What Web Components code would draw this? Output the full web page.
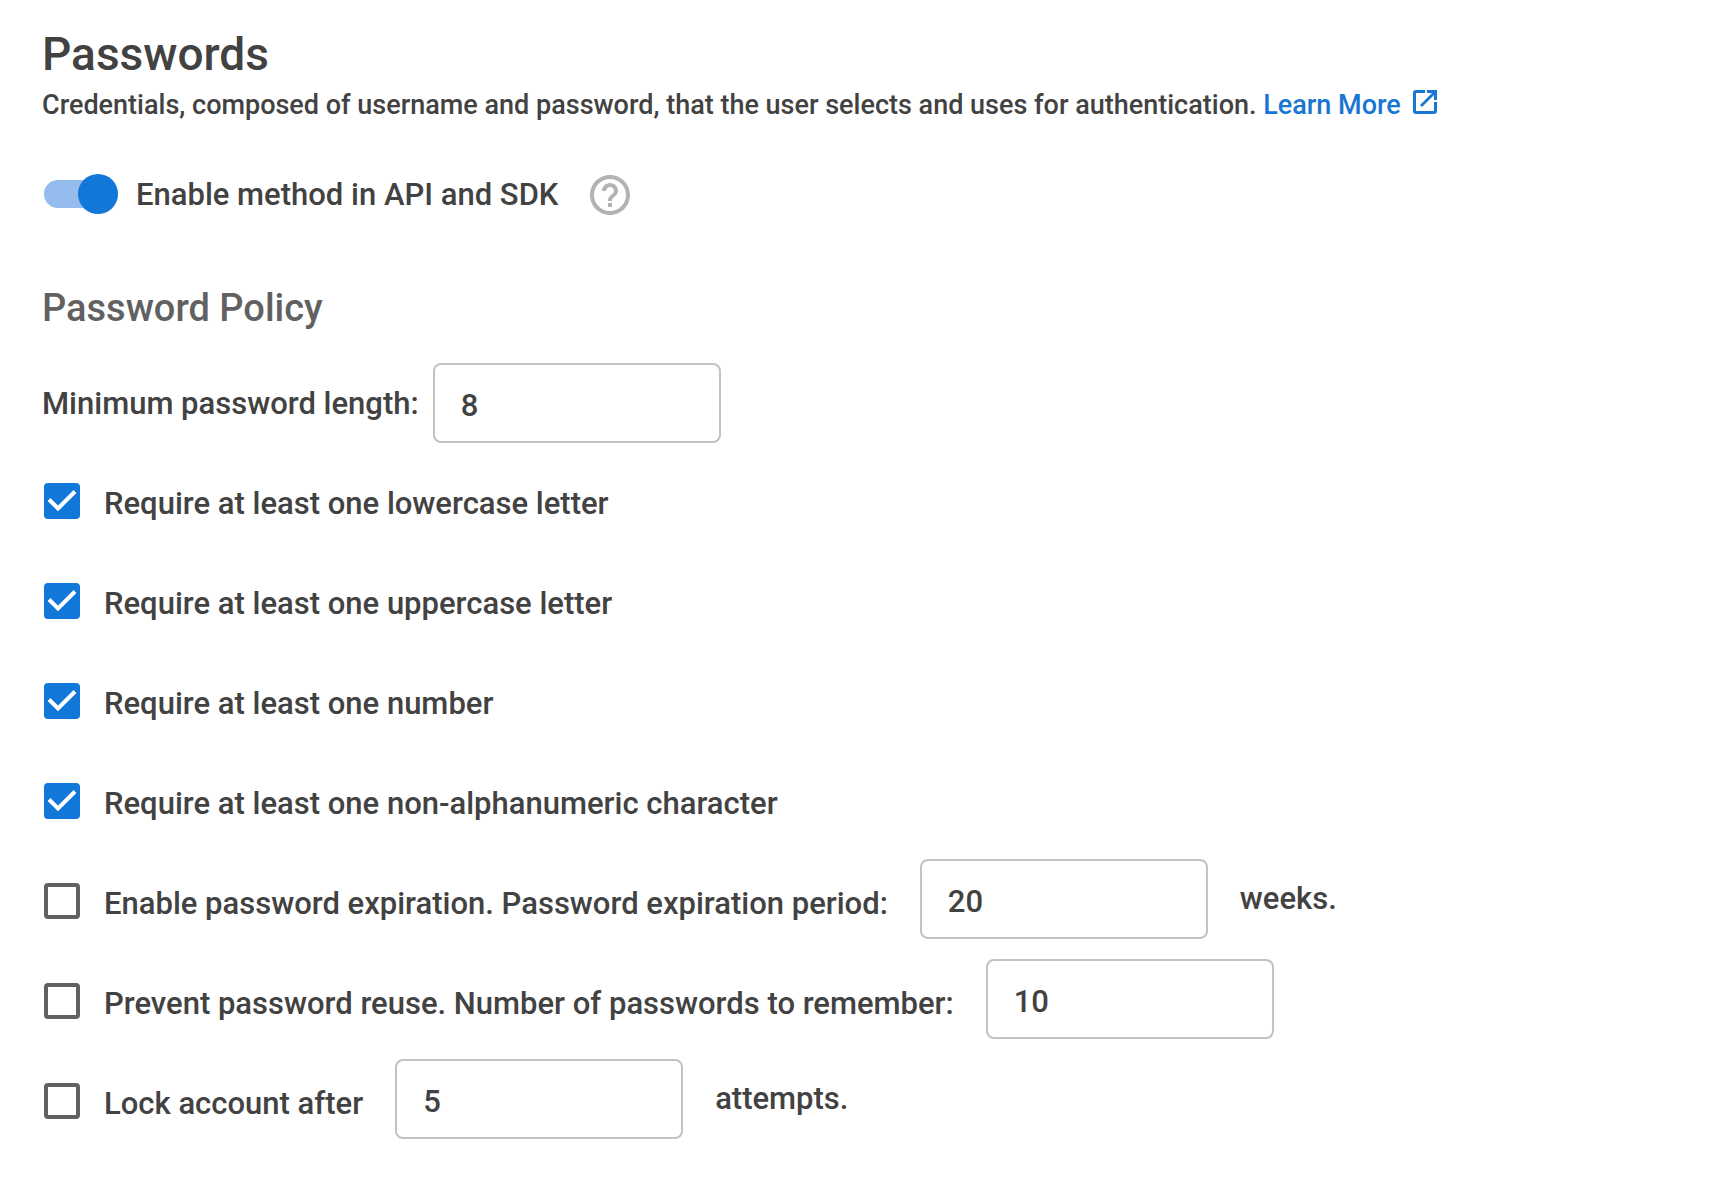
<!DOCTYPE html>
<html lang="en">
<head>
<meta charset="utf-8">
<meta name="viewport" content="width=device-width, initial-scale=1">
<title>Passwords</title>
<style>
    body { margin: 0; background: #fff; color: #424242; font: 500 31px/40px Roboto, "Liberation Sans", sans-serif; }
</style>
</head>
<body>
<password-settings></password-settings>

<script>
class ExternalLink extends HTMLElement {
    constructor() {
        super();
        this.attachShadow({ mode: 'open' });
    }

    connectedCallback() {
        this.shadowRoot.innerHTML = `
        <style>
            :host { display: inline; }
            a { color: #1976d2; text-decoration: none; }
            svg { width: 32px; height: 32px; margin-left: 8px; vertical-align: -4px; fill: currentColor; }
        </style>
        <a href="${this.getAttribute('href') || '#'}"><slot></slot><svg viewBox="0 0 32 32" aria-hidden="true">
            <path d="M7 4h9v3H7v18h18v-9h3v9a3 3 0 0 1-3 3H7a3 3 0 0 1-3-3V7a3 3 0 0 1 3-3zM18 4h10v10h-3V9L13 21l-2-2L23 7h-5z"/>
        </svg></a>`;
    }
}
customElements.define('external-link', ExternalLink);

class ToggleSwitch extends HTMLElement {
    constructor() {
        super();
        this.attachShadow({ mode: 'open' });
    }

    connectedCallback() {
        this.shadowRoot.innerHTML = `
        <style>
            :host { display: block; }
            label { display: flex; align-items: center; gap: 18px; cursor: pointer; }
            input { appearance: none; display: flex; align-items: center; width: 74px; height: 40px; margin: 0; flex: none;
                position: relative; cursor: pointer; }
            input::before { content: ""; flex: 1; height: 28px; border-radius: 14px; background: #bdbdbd; }
            input::after { content: ""; position: absolute; left: 0; top: 0; width: 40px; height: 40px; border-radius: 50%; background: #757575; }
            input:checked::before { background: #94bced; }
            input:checked::after { left: auto; right: 0; background: #1177d9; }
            span { padding-top: 2px; }
        </style>
        <label>
            <input type="checkbox" role="switch" ${this.hasAttribute('checked') ? 'checked' : ''}>
            <span><slot></slot></span>
        </label>`;
    }
}
customElements.define('toggle-switch', ToggleSwitch);

class HelpButton extends HTMLElement {
    constructor() {
        super();
        this.attachShadow({ mode: 'open' });
    }

    connectedCallback() {
        this.shadowRoot.innerHTML = `
        <style>
            :host { display: block; padding-top: 2px; }
            button { display: block; padding: 0; border: 0; background: none; color: #b3b3b3; cursor: pointer; }
            svg { display: block; width: 40px; height: 40px; }
        </style>
        <button type="button" aria-label="Help">
            <svg viewBox="2 2 20 20" fill="currentColor" aria-hidden="true">
                <path d="M11 18h2v-2h-2v2zm1-16C6.480 2 2 6.480 2 12s4.480 10 10 10 10-4.480 10-10S17.520 2 12 2zm0 18c-4.410 0-8-3.590-8-8s3.590-8 8-8 8 3.590 8 8-3.590 8-8 8zm0-14c-2.210 0-4 1.790-4 4h2c0-1.100.900-2 2-2s2 .900 2 2c0 2-3 1.750-3 5h2c0-2.250 3-2.500 3-5 0-2.210-1.790-4-4-4z"/>
            </svg>
        </button>`;
    }
}
customElements.define('help-button', HelpButton);

// The slotted text is the visible label; use the label attribute when there is none.
class NumberField extends HTMLElement {
    constructor() {
        super();
        this.attachShadow({ mode: 'open' });
    }

    connectedCallback() {
        const label = this.getAttribute('label');
        this.shadowRoot.innerHTML = `
        <style>
            :host { display: flex; align-items: center; gap: 14px; }
            label { padding-top: 2px; }
            label:empty { display: none; }
            input { appearance: textfield; box-sizing: border-box; width: 288px; height: 80px; margin: 0; padding: 4px 26px 0;
                border: 2px solid #c2c2c2; border-radius: 8px; background: #fff; color: inherit; font: inherit; }
            input::-webkit-inner-spin-button { appearance: none; }
            input:focus { outline: none; border-color: #1177d9; }
        </style>
        <label for="field">${label ? '' : '<slot></slot>'}</label>
        <input id="field" type="number" min="1" value="${this.getAttribute('value')}" ${label ? `aria-label="${label}"` : ''}>`;
    }
}
customElements.define('number-field', NumberField);

class CheckOption extends HTMLElement {
    constructor() {
        super();
        this.attachShadow({ mode: 'open' });
    }

    connectedCallback() {
        this.shadowRoot.innerHTML = `
        <style>
            :host { display: flex; align-items: center; gap: 32px; min-height: 80px; }
            label { display: flex; align-items: center; gap: 24px; padding-top: 4px; cursor: pointer; }
            input { appearance: none; box-sizing: border-box; width: 36px; height: 36px; margin: 0; flex: none;
                border: 4px solid #616161; border-radius: 4px; cursor: pointer; }
            input:checked { border-color: #1177d9; background: #1177d9; }
            .box { display: grid; }
            .box > * { grid-area: 1 / 1; }
            svg { width: 36px; height: 36px; fill: none; stroke: #fff; stroke-width: 4; pointer-events: none; visibility: hidden; }
            input:checked + svg { visibility: visible; }
            .text { padding-top: 5px; }
        </style>
        <label>
            <span class="box">
                <input type="checkbox" ${this.hasAttribute('checked') ? 'checked' : ''}>
                <svg viewBox="0 0 36 36" aria-hidden="true"><path d="M5 16.500l9 9L31 8.500"/></svg>
            </span>
            <span class="text"><slot></slot></span>
        </label>
        <slot name="after"></slot>`;
    }
}
customElements.define('check-option', CheckOption);

class PasswordSettings extends HTMLElement {
    constructor() {
        super();
        this.attachShadow({ mode: 'open' });
    }

    connectedCallback() {
        this.shadowRoot.innerHTML = `
        <style>
            :host { display: block; padding: 24px 42px; }
            h1 { margin: 0; font-size: 46px; line-height: 60px; font-weight: 500; }
            p { margin: 1px 0 0; font-size: 27px; }
            .method { display: flex; align-items: center; gap: 32px; margin: 48px 0 0 2px; }
            h2 { margin: 71px 0 33px; color: #616161; font-size: 38px; line-height: 44px; font-weight: 500; }
            .options { display: grid; gap: 20px; margin: 16px 0 0 2px; }
        </style>
        <header>
            <h1>Passwords</h1>
            <p>Credentials, composed of username and password, that the user selects and uses for authentication. <external-link href="#learn-more">Learn More</external-link></p>
        </header>
        <div class="method">
            <toggle-switch checked>Enable method in API and SDK</toggle-switch>
            <help-button></help-button>
        </div>
        <section>
            <h2>Password Policy</h2>
            <number-field value="8">Minimum password length:</number-field>
            <div class="options">
                <check-option checked>Require at least one lowercase letter</check-option>
                <check-option checked>Require at least one uppercase letter</check-option>
                <check-option checked>Require at least one number</check-option>
                <check-option checked>Require at least one non-alphanumeric character</check-option>
                <check-option>Enable password expiration. Password expiration period:
                    <number-field slot="after" label="Expiration period in weeks" value="20"></number-field>
                    <span slot="after">weeks.</span>
                </check-option>
                <check-option>Prevent password reuse. Number of passwords to remember:
                    <number-field slot="after" label="Number of passwords to remember" value="10"></number-field>
                </check-option>
                <check-option>Lock account after
                    <number-field slot="after" label="Attempts before lock" value="5"></number-field>
                    <span slot="after">attempts.</span>
                </check-option>
            </div>
        </section>`;
    }
}
customElements.define('password-settings', PasswordSettings);
</script>
</body>
</html>
